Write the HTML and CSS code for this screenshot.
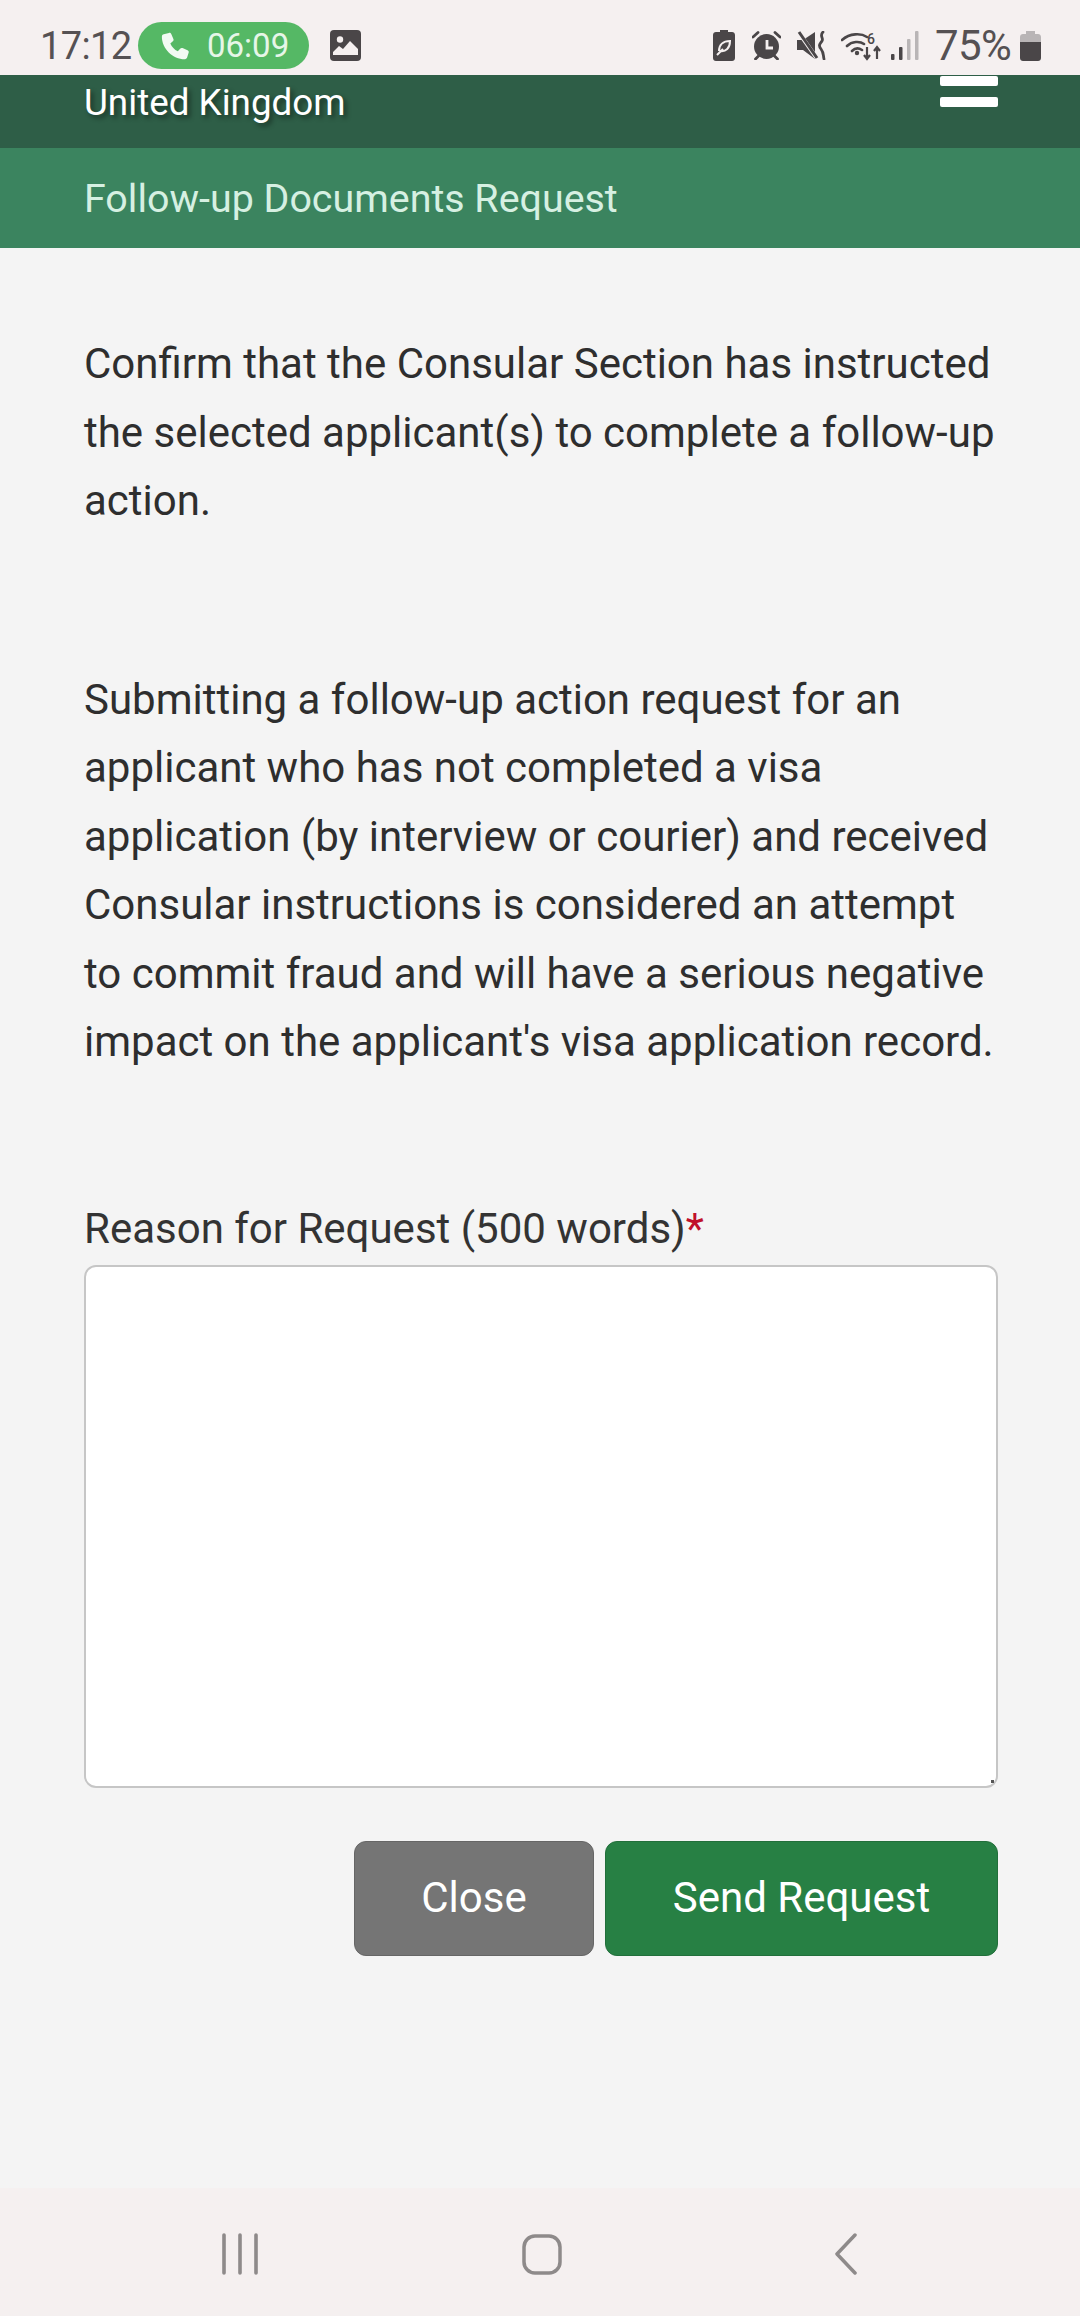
FILE: index.html
```html
<!DOCTYPE html>
<html lang="en">
<head>
<meta charset="utf-8">
<title>Follow-up Documents Request</title>
<link rel="stylesheet" href="styles.css">
</head>
<body>
<div class="page">
  <header class="status">
    <div class="status-left">
      <span class="clock">17:12</span>
      <span class="call">
        <svg class="call-icon" viewBox="0 0 32 32"><path d="M4 3.500 9.500 2c1.200-.3 2 .3 2.500 1.300l2.300 5.200c.4 1 .2 1.800-.6 2.500l-2.700 2.300c1.600 3.600 4.400 6.600 8 8.400l2.500-2.900c.7-.8 1.600-1 2.500-.6l5.400 2.400c1 .5 1.500 1.300 1.200 2.400L29 28c-.3 1.200-1.200 2-2.500 2C13.500 30 2 18.500 2 6c0-1.300.8-2.200 2-2.500Z"/></svg>
        <span>06:09</span>
      </span>
      <svg class="pic-icon" viewBox="0 0 31 31"><rect width="31" height="31" rx="4" fill="#4a4648"/><circle cx="10" cy="9.500" r="3.200" fill="#f5f0f0"/><path d="M3 25v-3l6-6 4 3 7-8 8 8v6Z" fill="#f5f0f0"/></svg>
    </div>
    <div class="status-right">
      <svg class="ic-leaf" viewBox="0 0 22 31"><path d="M7 0h8v2h4c1.700 0 3 1.300 3 3v23c0 1.700-1.300 3-3 3H3c-1.700 0-3-1.300-3-3V5c0-1.700 1.300-3 3-3h4Z" fill="#4a4648"/><path d="M6 21c0-6 4-10 11-10 0 7-4 11-10 10M4 25l6-6" fill="none" stroke="#f5f0f0" stroke-width="2"/></svg>
      <svg class="ic-alarm" viewBox="0 0 29 29"><circle cx="14.500" cy="15.500" r="12.500" fill="#4a4648"/><path d="M1 6 6 1.500M28 6l-5-4.500M3.500 28l3-3M25.500 28l-3-3" stroke="#4a4648" stroke-width="2.800" stroke-linecap="round"/><path d="M15 9v8h6" fill="none" stroke="#f5f0f0" stroke-width="2.800"/></svg>
      <svg class="ic-mute" viewBox="0 0 29 29"><path d="M0 9h6L18 1v27L6 19H0Z" fill="#4a4648"/><path d="M0-1l21 30" stroke="#f5f0f0" stroke-width="4"/><path d="M2 1l18 26" stroke="#4a4648" stroke-width="3"/><path d="M26 1c-4 4 1 6-1 9s-4 4-1 8 2 6 3 10" fill="none" stroke="#4a4648" stroke-width="2.800" stroke-linecap="round"/></svg>
      <svg class="ic-wifi" viewBox="0 0 41 30"><path d="M1 9c8-7 19-7 25-3M6 15c5-5 13-5 17-2M11 20c3-3 7-3 10-1" fill="none" stroke="#4a4648" stroke-width="2.600" stroke-linecap="round"/><circle cx="16" cy="22" r="2.200" fill="#4a4648"/><text class="wifi-six" x="26" y="13">6</text><path d="M26 16v12m-3-4 3 4 3-4M36 28V16m-3 4 3-4 3 4" fill="none" stroke="#4a4648" stroke-width="2.200"/></svg>
      <svg class="ic-signal" viewBox="0 0 28 29"><g fill="#4a4648"><rect y="23" width="3.500" height="6" rx="1"/><rect x="8" y="16" width="3.500" height="13" rx="1"/></g><g fill="#b9b5b6"><rect x="16" y="8" width="3.500" height="21" rx="1"/><rect x="24" width="3.500" height="29" rx="1"/></g></svg>
      <span class="pct">75%</span>
      <svg class="ic-batt" viewBox="0 0 21 30"><path d="M6 0h9v3h3c1.700 0 3 1.300 3 3v5H0V6c0-1.700 1.300-3 3-3h3Z" fill="#b9b5b6"/><path d="M0 11h21v16c0 1.700-1.300 3-3 3H3c-1.700 0-3-1.300-3-3Z" fill="#4a4648"/></svg>
    </div>
  </header>

  <div class="topbar">
    <span class="country">United Kingdom</span>
    <div class="burger"><i></i><i></i></div>
  </div>
  <div class="subbar">Follow-up Documents Request</div>

  <main class="content">
    <p class="para first">Confirm that the Consular Section has instructed the selected applicant(s) to complete a follow-up action.</p>
    <p class="para second">Submitting a follow-up action request for an applicant who has not completed a visa application (by interview or courier) and received Consular instructions is considered an attempt to commit fraud and will have a serious negative impact on the applicant's visa application record.</p>
    <label class="label" for="reason">Reason for Request (500 words)<span class="req">*</span></label>
    <div class="field">
      <textarea class="reason" id="reason"></textarea>
      <span class="grip"></span>
    </div>
    <div class="actions">
      <button class="btn btn-close" type="button">Close</button>
      <button class="btn btn-send" type="button">Send Request</button>
    </div>
  </main>

  <nav class="navbar">
    <svg class="nav-recent" viewBox="0 0 38 42"><path d="M3 2v38M19 2v38M35 2v38" stroke="#8e8a8a" stroke-width="3.600" stroke-linecap="round"/></svg>
    <svg class="nav-home" viewBox="0 0 40 41"><rect x="2" y="2" width="36" height="37" rx="11" fill="none" stroke="#8e8a8a" stroke-width="3.500"/></svg>
    <svg class="nav-back" viewBox="0 0 24 42"><path d="M21 2 3 21l18 19" fill="none" stroke="#8e8a8a" stroke-width="3.500" stroke-linecap="round" stroke-linejoin="round"/></svg>
  </nav>
</div>
</body>
</html>
```
FILE: styles.css
```css
* { box-sizing: border-box; }
html, body { margin: 0; padding: 0; }
body { font-family: Roboto, "Liberation Sans", sans-serif; background: #f4f4f4; }
.page { width: 1080px; height: 2316px; display: flex; flex-direction: column; overflow: hidden; }

.status { height: 75px; flex: none; background: #f5f0f0; display: flex; justify-content: space-between; align-items: center; padding: 16px 39px 0 40px; color: #4a4648; }
.status-left, .status-right { display: flex; align-items: center; }
.clock { font-size: 38px; font-weight: 400; width: 98px; letter-spacing: -.6px; color: #555153; }
.call { width: 171px; height: 47px; border-radius: 24px; background: #55b865; color: #e6f6e8; display: flex; align-items: center; padding-left: 22px; gap: 17px; font-size: 33px; font-weight: 400; }
.call-icon { width: 30px; height: 30px; fill: #f2faf3; }
.pic-icon { width: 31px; height: 31px; margin-left: 21px; }
.status-right svg { display: block; flex: none; }
.ic-leaf { width: 22px; height: 31px; margin-right: 17px; }
.ic-alarm { width: 29px; height: 29px; margin-right: 16px; }
.ic-mute { width: 29px; height: 29px; margin-right: 15px; }
.ic-wifi { width: 41px; height: 30px; margin-right: 9px; }
.ic-signal { width: 28px; height: 29px; margin-right: 16px; }
.wifi-six { font-size: 14px; font-weight: 500; fill: #4a4648; font-family: Roboto, sans-serif; }
.pct { font-size: 42px; font-weight: 400; width: 85px; letter-spacing: -.6px; color: #555153; }
.ic-batt { width: 21px; height: 30px; }

.topbar { height: 73px; flex: none; background: #2e5e47; display: flex; justify-content: space-between; align-items: flex-start; padding: 0 82px 0 84px; }
.country { color: #fff; font-size: 36.800px; line-height: 56px; text-shadow: 3px 3px 5px rgba(0,0,0,.45); }
.burger { display: flex; flex-direction: column; gap: 11px; padding-top: 1px; }
.burger i { display: block; width: 58px; height: 10px; border-radius: 2px; background: #fff; }
.subbar { height: 100px; flex: none; background: #3b845f; color: #d6f0e2; font-size: 39.400px; line-height: 101px; padding-left: 84px; }

.content { flex: 1; padding: 0 82px 0 84px; color: #2e2e2e; }
.para { margin: 0; font-size: 42px; line-height: 68.500px; }
.para.first { padding-top: 82px; }
.para.second { padding-top: 130px; }
.label { display: block; font-size: 42px; line-height: 56px; margin-top: 124px; color: #333; }
.req { color: #c0102a; }
.field { position: relative; margin-top: 8px; }
.reason { display: block; width: 914px; height: 523px; background: #fff; border: 2px solid #c6c6c6; border-radius: 12px; resize: none; }
.grip { position: absolute; right: 4px; bottom: 5px; width: 3px; height: 3px; background: #555; }
.actions { display: flex; justify-content: flex-end; gap: 11px; margin-top: 53px; }
.btn { height: 115px; border-radius: 12px; color: #fff; font-family: Roboto, sans-serif; font-size: 42px; border: 1px solid; padding: 0 0 2px; }
.btn-close { width: 240px; background: #757575; border-color: #666; }
.btn-send { width: 393px; background: #278044; border-color: #226f3b; }

.navbar { height: 128px; flex: none; background: #f5f0f0; display: flex; align-items: center; padding: 4px 0 0 0; }
.navbar svg { display: block; flex: none; }
.nav-recent { width: 38px; height: 42px; margin-left: 221px; }
.nav-home { width: 40px; height: 41px; margin-left: 263px; }
.nav-back { width: 24px; height: 42px; margin-left: 272px; }
```
